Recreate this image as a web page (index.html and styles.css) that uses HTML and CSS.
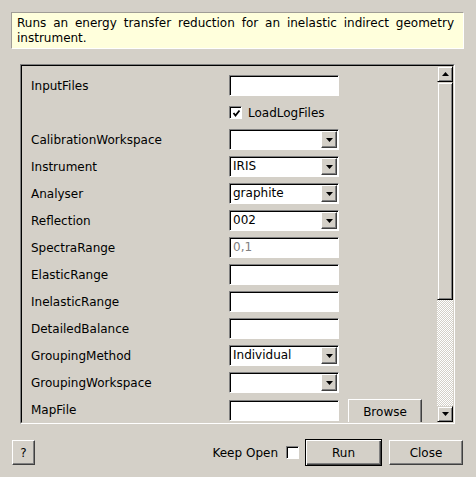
FILE: index.html
```html
<!DOCTYPE html>
<html>
<head>
<meta charset="utf-8">
<link rel="stylesheet" href="styles.css">
</head>
<body>
<div class="dialog">
  <div class="desc">Runs an energy transfer reduction for an inelastic indirect geometry instrument.</div>
  <div class="scroll-outer">
    <div class="scroll-inner">
      <div class="viewport">
        <div class="form">
          <div class="label">InputFiles</div>
          <div class="field"></div>
          <div></div>

          <div></div>
          <div class="check-row"><span class="checkbox"><svg width="9" height="9" viewBox="0 0 9 9"><polyline points="1.5,4 3.5,6.5 7.5,1.5" fill="none" stroke="#000" stroke-width="1.8"/></svg></span><span>LoadLogFiles</span></div>
          <div></div>

          <div class="label">CalibrationWorkspace</div>
          <div class="combo"><span class="combo-text"></span><span class="combo-btn"><svg width="7" height="4" viewBox="0 0 7 4"><polygon points="0,0 7,0 3.5,4" fill="#000"/></svg></span></div>
          <div></div>

          <div class="label">Instrument</div>
          <div class="combo"><span class="combo-text">IRIS</span><span class="combo-btn"><svg width="7" height="4" viewBox="0 0 7 4"><polygon points="0,0 7,0 3.5,4" fill="#000"/></svg></span></div>
          <div></div>

          <div class="label">Analyser</div>
          <div class="combo"><span class="combo-text">graphite</span><span class="combo-btn"><svg width="7" height="4" viewBox="0 0 7 4"><polygon points="0,0 7,0 3.5,4" fill="#000"/></svg></span></div>
          <div></div>

          <div class="label">Reflection</div>
          <div class="combo"><span class="combo-text">002</span><span class="combo-btn"><svg width="7" height="4" viewBox="0 0 7 4"><polygon points="0,0 7,0 3.5,4" fill="#000"/></svg></span></div>
          <div></div>

          <div class="label">SpectraRange</div>
          <div class="field disabled">0,1</div>
          <div></div>

          <div class="label">ElasticRange</div>
          <div class="field"></div>
          <div></div>

          <div class="label">InelasticRange</div>
          <div class="field"></div>
          <div></div>

          <div class="label">DetailedBalance</div>
          <div class="field"></div>
          <div></div>

          <div class="label">GroupingMethod</div>
          <div class="combo"><span class="combo-text">Individual</span><span class="combo-btn"><svg width="7" height="4" viewBox="0 0 7 4"><polygon points="0,0 7,0 3.5,4" fill="#000"/></svg></span></div>
          <div></div>

          <div class="label">GroupingWorkspace</div>
          <div class="combo"><span class="combo-text"></span><span class="combo-btn"><svg width="7" height="4" viewBox="0 0 7 4"><polygon points="0,0 7,0 3.5,4" fill="#000"/></svg></span></div>
          <div></div>

          <div class="label">MapFile</div>
          <div class="field"></div>
          <div class="button browse">Browse</div>
        </div>
      </div>
      <div class="vscroll">
        <div class="sb-btn"><svg width="7" height="4" viewBox="0 0 7 4"><polygon points="0,4 7,4 3.5,0" fill="#000"/></svg></div>
        <div class="sb-thumb"></div>
        <div class="sb-track"></div>
        <div class="sb-btn"><svg width="7" height="4" viewBox="0 0 7 4"><polygon points="0,0 7,0 3.5,4" fill="#000"/></svg></div>
      </div>
    </div>
  </div>
  <div class="footer">
    <div class="button help">?</div>
    <div class="spacer"></div>
    <span class="keep-label">Keep Open</span>
    <span class="checkbox keep-box"></span>
    <div class="button run">Run</div>
    <div class="button close">Close</div>
  </div>
</div>
</body>
</html>
```
FILE: styles.css
```css
* { box-sizing: border-box; }
html, body {
  margin: 0;
  padding: 0;
  background: #d4d0c8;
}
body {
  font-family: "DejaVu Sans", sans-serif;
  font-size: 12px;
  color: #000;
  width: 476px;
  height: 477px;
  overflow: hidden;
}
.dialog {
  padding-top: 12px;
}
.desc {
  margin: 0 12px 0 11px;
  height: 37px;
  background: #ffffdc;
  border: 1px solid;
  border-color: #a09d96 #fff #fff #a09d96;
  padding: 3px 9px 0 5px;
  line-height: 15px;
  text-align: justify;
}
.scroll-outer {
  margin: 15px 0 0 20px;
  width: 435px;
  height: 360px;
  border: 1px solid;
  border-color: #808080 #fff #fff #808080;
}
.scroll-inner {
  height: 100%;
  border: 1px solid;
  border-color: #000 #d4d0c8 #d4d0c8 #000;
  display: flex;
}
.viewport {
  flex: 1;
  overflow: hidden;
}
.form {
  padding: 9px 0 0 9px;
  display: grid;
  grid-template-columns: 189px 110px 74px;
  grid-auto-rows: 21px;
  column-gap: 9px;
  row-gap: 6px;
  align-items: center;
}
.form > :nth-child(4), .form > :nth-child(5), .form > :nth-child(6) {
  height: 20px;
}
.label {
  white-space: nowrap;
  line-height: 21px;
  margin-top: 1px;
}
.field {
  height: 21px;
  background: #fff;
  border: 1px solid;
  border-color: #808080 #fff #fff #808080;
  box-shadow: inset 1px 1px #000;
  padding: 0 3px;
  line-height: 19px;
}
.field.disabled {
  color: #808080;
}
.combo {
  height: 21px;
  background: #fff;
  border: 1px solid;
  border-color: #808080 #fff #fff #808080;
  box-shadow: inset 1px 1px #000;
  display: flex;
  padding: 1px;
}
.combo-text {
  flex: 1;
  padding-left: 2px;
  line-height: 17px;
}
.combo-btn {
  width: 16px;
  height: 17px;
  background: #d4d0c8;
  border: 1px solid;
  border-color: #fff #404040 #404040 #fff;
  box-shadow: inset -1px -1px #808080;
  display: flex;
  align-items: center;
  justify-content: center;
}
.check-row {
  display: flex;
  align-items: center;
  gap: 6px;
  white-space: nowrap;
}
.checkbox {
  width: 13px;
  height: 13px;
  background: #fff;
  border: 1px solid;
  border-color: #808080 #fff #fff #808080;
  box-shadow: inset 1px 1px #000;
  display: inline-flex;
  align-items: center;
  justify-content: center;
  flex: none;
}
.checkbox svg { margin: 1px 0 0 1px; }
.button {
  background: #d4d0c8;
  border: 1px solid;
  border-color: #fff #404040 #404040 #fff;
  box-shadow: inset -1px -1px #808080;
  display: flex;
  align-items: center;
  justify-content: center;
  white-space: nowrap;
}
.browse {
  height: 25px;
  align-self: start;
}
.form > :nth-last-child(-n+3) {
  margin-top: 2px;
}
.form > .browse {
  margin-top: 0;
}
.vscroll {
  width: 16px;
  display: flex;
  flex-direction: column;
}
.sb-btn {
  height: 16px;
  background: #d4d0c8;
  border: 1px solid;
  border-color: #d4d0c8 #000 #000 #d4d0c8;
  box-shadow: inset 1px 1px #fff, inset -1px -1px #808080;
  display: flex;
  align-items: center;
  justify-content: center;
}
.sb-thumb {
  height: 218px;
  background: #d4d0c8;
  border: 1px solid;
  border-color: #d4d0c8 #000 #000 #d4d0c8;
  box-shadow: inset 1px 1px #fff, inset -1px -1px #808080;
}
.sb-track {
  flex: 1;
  background: repeating-conic-gradient(#fff 0 25%, #d4d0c8 0 50%) 0 0 / 2px 2px;
}
.footer {
  margin-top: 15px;
  height: 27px;
  display: flex;
  align-items: center;
  padding: 0 13px 0 12px;
}
.help {
  width: 23px;
  height: 25px;
}
.spacer { flex: 1; }
.keep-label {
  margin-right: 8px;
}
.keep-box {
  margin-right: 6px;
}
.run {
  width: 77px;
  height: 27px;
  border: 1px solid #000;
  box-shadow: inset 1px 1px #fff, inset -1px -1px #404040, inset -2px -2px #808080;
  margin-right: 7px;
}
.close {
  width: 74px;
  height: 25px;
}
```
